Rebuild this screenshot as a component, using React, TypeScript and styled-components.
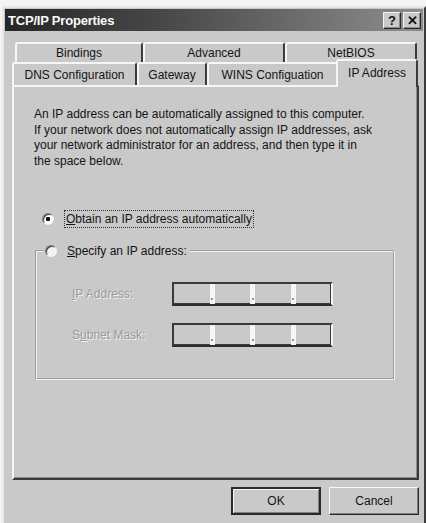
import styled, { createGlobalStyle } from 'styled-components';

const GlobalStyle = createGlobalStyle`
    html, body {
        margin: 0;
        background: #f4f4f4;
    }
    body {
        padding: 6px 0 0 2px;
        font-family: "Liberation Sans", Arial, sans-serif;
        font-size: 12px;
        color: #141414;
    }
`;

const Window = styled.div`
    box-sizing: border-box;
    width: 424px;
    height: 530px;
    padding: 1px;
    background: #c9c9c9;
    border: 2px solid;
    border-color: #e8e8e8 #3a3a3a #3a3a3a #e8e8e8;
`;

const TitleBar = styled.div`
    height: 22px;
    display: flex;
    align-items: center;
    justify-content: space-between;
    padding: 0 2px 0 3px;
    background: linear-gradient(to right, #262626, #4a4a4a 40%, #8e8e8e);
`;

const Title = styled.span`
    color: #fafafa;
    font-weight: bold;
    font-size: 13px;
    letter-spacing: -0.2px;
`;

const TitleButtons = styled.div`
    display: flex;
    gap: 2px;
`;

const TitleButton = styled.div`
    box-sizing: border-box;
    width: 18px;
    height: 17px;
    display: flex;
    align-items: center;
    justify-content: center;
    background: #c9c9c9;
    border: 1px solid;
    border-color: #f4f4f4 #2a2a2a #2a2a2a #f4f4f4;
    box-shadow: inset -1px -1px 0 #8a8a8a;
    font-weight: bold;
    font-size: 13px;
    color: #111;
`;

const Body = styled.div`
    padding: 11px 4px 0 7px;
`;

const TabRow = styled.div<{ $indent: number; $height: number }>`
    display: flex;
    align-items: flex-end;
    height: ${(p) => p.$height}px;
    padding-left: ${(p) => p.$indent}px;
`;

const Tab = styled.div<{ $w: number; $selected?: boolean; $back?: boolean }>`
    box-sizing: border-box;
    width: ${(p) => p.$w + (p.$selected ? 2 : 0)}px;
    height: ${(p) => (p.$selected ? 28 : p.$back ? 20 : 23)}px;
    margin-left: ${(p) => (p.$selected ? -2 : 0)}px;
    margin-bottom: ${(p) => (p.$selected ? -2 : 0)}px;
    position: relative;
    z-index: ${(p) => (p.$selected ? 1 : 0)};
    display: flex;
    align-items: ${(p) => (p.$selected ? 'flex-start' : 'center')};
    justify-content: center;
    padding-top: ${(p) => (p.$selected ? 5 : 0)}px;
    background: #c9c9c9;
    border: 2px solid;
    border-bottom: none;
    border-color: #f6f6f6 #3a3a3a #c9c9c9 #f6f6f6;
    border-radius: 3px 3px 0 0;
    white-space: nowrap;
`;

const Panel = styled.div`
    box-sizing: border-box;
    height: 395px;
    padding: 20px 20px 0 20px;
    border: 2px solid;
    border-color: #f6f6f6 #3a3a3a #3a3a3a #f6f6f6;
    box-shadow: inset -1px -1px 0 #8c8c8c;
`;

const Intro = styled.p`
    margin: 0;
    line-height: 15.5px;
    white-space: nowrap;
`;

const Choice = styled.label`
    display: flex;
    align-items: center;
    gap: 10px;
    height: 16px;
`;

const FirstChoice = styled(Choice)`
    margin: 42px 0 0 8px;
`;

const Radio = styled.span<{ $checked?: boolean }>`
    box-sizing: border-box;
    width: 12px;
    height: 12px;
    border-radius: 50%;
    border: 1px solid;
    border-color: #7a7a7a #f4f4f4 #f4f4f4 #7a7a7a;
    background: ${(p) =>
        p.$checked
            ? 'radial-gradient(circle, #111 0 2px, #fff 2.5px)'
            : '#f2f2f2'};
    box-shadow: inset 1px 1px 0 #3a3a3a;
    flex-shrink: 0;
`;

const FocusText = styled.span`
    padding: 1px 1px;
    border: 1px dotted #333;
`;

const Key = styled.span`
    text-decoration: underline;
`;

const Group = styled.fieldset`
    margin: 16px 0 0 1px;
    width: 360px;
    height: 137px;
    box-sizing: border-box;
    padding: 0 0 0 35px;
    border: 2px groove #f0f0f0;
    display: flex;
    flex-direction: column;
    gap: 17px;
`;

const Legend = styled.legend`
    padding: 0 3px 0 1px;
    margin-left: -28px;
`;

const FieldRow = styled.div`
    display: flex;
    align-items: center;
    &:first-of-type {
        margin-top: 23px;
    }
`;

const FieldLabel = styled.span`
    width: 100px;
    color: #9a9a9a;
    text-shadow: 1px 1px 0 #f2f2f2;
`;

const IpBox = styled.div`
    box-sizing: border-box;
    width: 161px;
    height: 24px;
    display: flex;
    border: 2px solid;
    border-color: #3a3a3a #f6f6f6 #2e2e2e #3a3a3a;
    box-shadow: inset -1px -1px 0 #3a3a3a;
    background: #c9c9c9;
`;

const Octet = styled.div`
    flex: 1;
`;

const Dot = styled.div`
    width: 5px;
    display: flex;
    align-items: flex-end;
    justify-content: center;
    background: #f6f6f6;
    padding-bottom: 4px;
    box-sizing: border-box;
    &::after {
        content: '';
        width: 2px;
        height: 2px;
        background: #9a9a9a;
    }
`;

const Footer = styled.div`
    display: flex;
    justify-content: flex-end;
    gap: 8px;
    margin-top: 7px;
`;

const Button = styled.button<{ $default?: boolean }>`
    box-sizing: border-box;
    width: 90px;
    height: 28px;
    font-family: inherit;
    font-size: 12px;
    color: #141414;
    background: #c9c9c9;
    border: ${(p) => (p.$default ? 2 : 1)}px solid;
    border-color: ${(p) =>
        p.$default ? '#2a2a2a' : '#f6f6f6 #2a2a2a #2a2a2a #f6f6f6'};
    box-shadow: ${(p) =>
        p.$default
            ? 'inset 1px 1px 0 #f4f4f4, inset -1px -1px 0 #808080'
            : 'inset -1px -1px 0 #808080'};
    padding: 0;
`;

function IpField() {
    return (
        <IpBox>
            <Octet />
            <Dot />
            <Octet />
            <Dot />
            <Octet />
            <Dot />
            <Octet />
        </IpBox>
    );
}

function App() {
    return (
        <>
            <GlobalStyle />
            <Window>
                <TitleBar>
                    <Title>TCP/IP Properties</Title>
                    <TitleButtons>
                        <TitleButton>?</TitleButton>
                        <TitleButton>✕</TitleButton>
                    </TitleButtons>
                </TitleBar>
                <Body>
                    <TabRow $indent={3} $height={20}>
                        <Tab $w={128} $back>Bindings</Tab>
                        <Tab $w={142} $back>Advanced</Tab>
                        <Tab $w={132} $back>NetBIOS</Tab>
                    </TabRow>
                    <TabRow $indent={0} $height={23}>
                        <Tab $w={125}>DNS Configuration</Tab>
                        <Tab $w={70}>Gateway</Tab>
                        <Tab $w={131}>WINS Configuation</Tab>
                        <Tab $w={80} $selected>
                            IP Address
                        </Tab>
                    </TabRow>
                    <Panel>
                        <Intro>
                            An IP address can be automatically assigned to this computer.
                            <br />
                            If your network does not automatically assign IP addresses, ask
                            <br />
                            your network administrator for an address, and then type it in
                            <br />
                            the space below.
                        </Intro>
                        <FirstChoice>
                            <Radio $checked />
                            <FocusText>
                                <Key>O</Key>btain an IP address automatically
                            </FocusText>
                        </FirstChoice>
                        <Group>
                            <Legend>
                                <Choice>
                                    <Radio />
                                    <span>
                                        <Key>S</Key>pecify an IP address:
                                    </span>
                                </Choice>
                            </Legend>
                            <FieldRow>
                                <FieldLabel>
                                    <Key>I</Key>P Address:
                                </FieldLabel>
                                <IpField />
                            </FieldRow>
                            <FieldRow>
                                <FieldLabel>
                                    S<Key>u</Key>bnet Mask:
                                </FieldLabel>
                                <IpField />
                            </FieldRow>
                        </Group>
                    </Panel>
                    <Footer>
                        <Button $default>OK</Button>
                        <Button>Cancel</Button>
                    </Footer>
                </Body>
            </Window>
        </>
    );
}

export default App;
